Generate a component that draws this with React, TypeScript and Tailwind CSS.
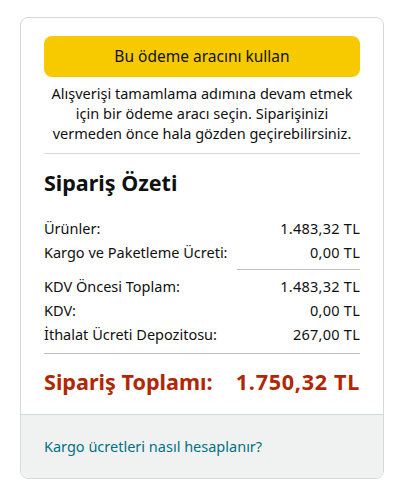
const rows1 = [
  { label: "Ürünler:", value: "1.483,32 TL" },
  { label: "Kargo ve Paketleme Ücreti:", value: "0,00 TL" },
];

const rows2 = [
  { label: "KDV Öncesi Toplam:", value: "1.483,32 TL" },
  { label: "KDV:", value: "0,00 TL" },
  { label: "İthalat Ücreti Depozitosu:", value: "267,00 TL" },
];

function Row({ label, value }: { label: string; value: string }) {
  return (
    <div className="flex justify-between h-[24px] items-center text-[14.5px] text-[#0f1111]">
      <span>{label}</span>
      <span className="tracking-[0.25px]">{value}</span>
    </div>
  );
}

export default function App() {
  return (
    <div
      className="min-h-screen bg-white pt-[17px] pl-[20px]"
      style={{ fontFamily: '"Noto Sans", Arial, sans-serif' }}
    >
      <div className="w-[364px] border border-[#d5d9d9] rounded-[8px] overflow-hidden">
        <div className="px-[23px] pt-[18px] pb-[18px]">
          {/* Payment button + hint */}
          <button className="w-full h-[41px] rounded-[8px] bg-[#f7ca00] text-[15.5px] text-[#0f1111]">
            Bu ödeme aracını kullan
          </button>
          <p className="mt-[6px] text-center text-[14.5px] leading-[20px] text-[#0f1111] whitespace-nowrap">
            Alışverişi tamamlama adımına devam etmek
            <br />
            için bir ödeme aracı seçin. Siparişinizi
            <br />
            vermeden önce hala gözden geçirebilirsiniz.
          </p>
          <div className="mt-[10px] border-t border-[#d5d9d9]" />

          {/* Summary */}
          <h3 className="mt-[15px] text-[21.5px] leading-[28px] font-bold text-[#0f1111]">
            Sipariş Özeti
          </h3>
          <div className="mt-[20px]">
            {rows1.map((r) => (
              <Row key={r.label} {...r} />
            ))}
          </div>
          <div className="flex justify-end mt-[4px] mb-[5px]">
            <div className="w-[123px] border-t border-[#bbbfbf]" />
          </div>
          <div>
            {rows2.map((r) => (
              <Row key={r.label} {...r} />
            ))}
          </div>
          <div className="mt-[6px] border-t border-[#bbbfbf]" />
          <div className="mt-[14px] flex justify-between text-[21.6px] leading-[28px] font-bold text-[#b12704]">
            <span>Sipariş Toplamı:</span>
            <span className="tracking-[0.7px]">1.750,32 TL</span>
          </div>
        </div>

        {/* Footer */}
        <div className="bg-[#f0f2f2] border-t border-[#d5d9d9] h-[64px] px-[23px] flex items-center">
          <a href="#" className="text-[14.5px] text-[#007185]">
            Kargo ücretleri nasıl hesaplanır?
          </a>
        </div>
      </div>
    </div>
  );
}
